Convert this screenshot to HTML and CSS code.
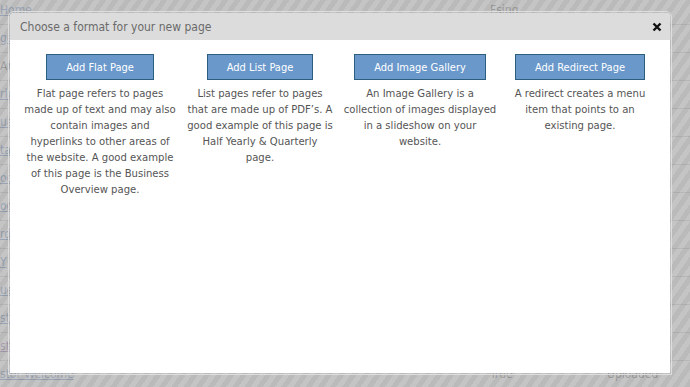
FILE: index.html
```html
<!DOCTYPE html>
<html lang="en">
<head>
    <meta charset="UTF-8">
    <title>Pages</title>
    <link rel="stylesheet" href="styles.css">
</head>
<body>
    <table class="pages">
        <tr><td><a href="#">Home</a></td><td>Fsing</td><td></td></tr>
        <tr><td><a href="#">ge</a></td><td></td><td></td></tr>
        <tr><td>An</td><td></td><td></td></tr>
        <tr><td><a href="#">rle</a></td><td></td><td></td></tr>
        <tr><td><a href="#">ua</a></td><td></td><td></td></tr>
        <tr><td><a href="#">ta</a></td><td></td><td></td></tr>
        <tr><td><a href="#">oo</a></td><td></td><td></td></tr>
        <tr><td><a href="#">oo</a></td><td></td><td></td></tr>
        <tr><td><a href="#">rd</a></td><td></td><td></td></tr>
        <tr><td><a href="#">Y</a></td><td></td><td></td></tr>
        <tr><td><a href="#">ue</a></td><td></td><td></td></tr>
        <tr><td><a href="#">st</a></td><td></td><td></td></tr>
        <tr><td><a href="#" class="visited">st</a></td><td></td><td></td></tr>
        <tr><td><a href="#">stor Welcome</a></td><td>True</td><td>Uploaded</td></tr>
    </table>

    <div class="overlay"></div>

    <div class="dialog">
        <div class="dialog-title">
            <span>Choose a format for your new page</span>
            <a href="#" class="close">
                <svg width="10" height="10" viewBox="0 0 10 10"><path d="M1.5 1.5 L8.5 8.5 M8.5 1.5 L1.5 8.5" stroke="#111" stroke-width="2.4"/></svg>
            </a>
        </div>
        <div class="formats">
            <div class="format">
                <button>Add Flat Page</button>
                <p>Flat page refers to pages<br>made up of text and may also<br>contain images and<br>hyperlinks to other areas of<br>the website. A good example<br>of this page is the Business<br>Overview page.</p>
            </div>
            <div class="format">
                <button>Add List Page</button>
                <p>List pages refer to pages<br>that are made up of PDF’s. A<br>good example of this page is<br>Half Yearly &amp; Quarterly<br>page.</p>
            </div>
            <div class="format">
                <button>Add Image Gallery</button>
                <p>An Image Gallery is a<br>collection of images displayed<br>in a slideshow on your<br>website.</p>
            </div>
            <div class="format">
                <button>Add Redirect Page</button>
                <p>A redirect creates a menu<br>item that points to an<br>existing page.</p>
            </div>
        </div>
    </div>
</body>
</html>
```

FILE: styles.css
```css
*{
    margin: 0;
    padding: 0;
    box-sizing: border-box;
}

body{
    width: 690px;
    height: 387px;
    overflow: hidden;
    position: relative;
    background: #fff;
    font-family: "DejaVu Sans Condensed", "DejaVu Sans", sans-serif;
}

.pages{
    border-collapse: collapse;
    width: 100%;
    margin-top: -4px;
    font-size: 12px;
    color: #333;
}

.pages td{
    height: 28px;
    border-bottom: 1px solid #bbb;
    vertical-align: middle;
}

.pages td:nth-child(1){
    width: 490px;
}

.pages td:nth-child(2){
    width: 117px;
}

.pages a{
    color: #2a5db0;
}

.pages a.visited{
    color: #7a3a9a;
}

.overlay{
    position: absolute;
    inset: 0;
    background: repeating-linear-gradient(-55deg, #a9a9a9 0, #a9a9a9 5px, #b6b6b6 5px, #b6b6b6 10px);
    opacity: 0.8;
}

.dialog{
    position: absolute;
    left: 10px;
    top: 13px;
    width: 660px;
    height: 360px;
    background: #fff;
    border-radius: 4px 4px 0 0;
    outline: 1px solid #dedede;
    outline-offset: 1px;
}

.dialog-title{
    height: 27px;
    background: #dcdcdc;
    border-radius: 4px 4px 0 0;
    display: flex;
    align-items: center;
    justify-content: space-between;
    padding: 0 8px 0 10px;
    font-size: 12px;
    color: #6a6a6a;
}

.close{
    display: flex;
}

.formats{
    display: grid;
    grid-template-columns: repeat(4, 1fr);
    padding: 14px 10px;
}

.format{
    display: flex;
    flex-direction: column;
    align-items: center;
}

.format button{
    height: 26px;
    padding: 0 19px;
    background: #6a98cb;
    border: 1px solid #2c5f7f;
    color: #fff;
    font-family: inherit;
    font-size: 11px;
}

.format p{
    margin-top: 6px;
    text-align: center;
    white-space: nowrap;
    font-size: 11.2px;
    line-height: 16px;
    color: #555;
}
```
